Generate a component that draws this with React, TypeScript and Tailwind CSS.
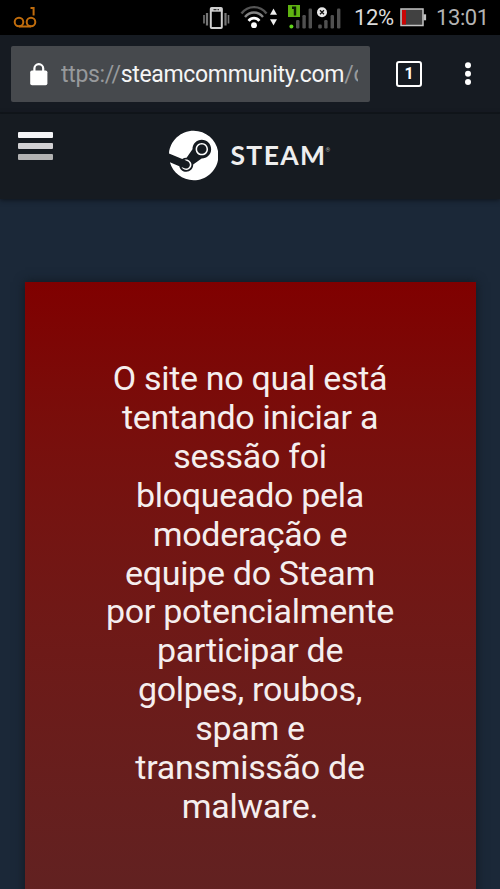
import { FaSteam } from 'react-icons/fa';

const MESSAGE_LINES = [
  'O site no qual está',
  'tentando iniciar a',
  'sessão foi',
  'bloqueado pela',
  'moderação e',
  'equipe do Steam',
  'por potencialmente',
  'participar de',
  'golpes, roubos,',
  'spam e',
  'transmissão de',
  'malware.',
];

function VoicemailIcon() {
  return (
    <svg className="ml-[13px] h-[35px] w-[24px]" viewBox="0 0 24 35" fill="none" stroke="#c06c0c" strokeWidth="2">
      <circle cx="6" cy="22" r="4.3" />
      <circle cx="18" cy="22" r="4.3" />
      <path d="M6 26.4H18M17.5 8H20.6V15.6" />
    </svg>
  );
}

function VibrateIcon() {
  return (
    <svg className="h-[35px] w-[28px]" viewBox="0 0 28 35" fill="none">
      <rect x="7.8" y="8" width="11" height="20" rx="0.8" stroke="#cfcfcf" strokeWidth="2" />
      <path d="M7.3 10H19.3" stroke="#cfcfcf" strokeWidth="3.4" />
      <path d="M10.5 9.6H16" stroke="#333" strokeWidth="1.2" strokeDasharray="3 1" />
      <path d="M4 13V25.5M22.5 13V25.5" stroke="#777" strokeWidth="2.2" />
      <path d="M1 15V23.5M25.5 15V23.5" stroke="#777" strokeWidth="1.6" />
    </svg>
  );
}

function WifiIcon() {
  return (
    <svg className="ml-[9px] h-[35px] w-[40px]" viewBox="0 0 40 35" fill="none">
      <path d="M1.5 13.5C8 5 20 5 26.5 13.5" stroke="#555" strokeWidth="2.4" />
      <path d="M5 17C10 11 18 11 23 17" stroke="#858585" strokeWidth="2.4" />
      <path d="M8.6 20.8C11.6 17.2 16.4 17.2 19.4 20.8" stroke="#fff" strokeWidth="2.8" />
      <circle cx="14" cy="25.2" r="2.9" fill="#fff" />
      <path d="M33.5 8.5L37 14.8H30Z" fill="#eee" />
      <path d="M33.5 25.5L37 19.2H30Z" fill="#eee" />
    </svg>
  );
}

function SimOneIcon() {
  return (
    <svg className="ml-[7px] h-[35px] w-[26px]" viewBox="0 0 26 35">
      <rect x="9" y="20" width="3.4" height="8.5" rx="1.2" fill="#505050" />
      <rect x="15.4" y="15" width="3.4" height="13.5" rx="1.2" fill="#505050" />
      <rect x="21.6" y="8.5" width="3.4" height="20" rx="1.2" fill="#505050" />
      <rect x="1" y="5" width="12" height="12" fill="#5fb311" />
      <path d="M5 7.8H8V15.5" fill="none" stroke="#0c1c02" strokeWidth="2.4" />
      <circle cx="4.4" cy="26.4" r="2" fill="#62d51c" />
    </svg>
  );
}

function SimTwoIcon() {
  return (
    <svg className="ml-[4px] h-[35px] w-[26px]" viewBox="0 0 26 35">
      <rect x="1.2" y="24.5" width="3.6" height="4" rx="1.2" fill="#505050" />
      <rect x="7.2" y="20" width="3.4" height="8.5" rx="1.2" fill="#505050" />
      <rect x="13.6" y="15" width="3.4" height="13.5" rx="1.2" fill="#505050" />
      <rect x="20" y="8.5" width="3.4" height="20" rx="1.2" fill="#505050" />
      <circle cx="5" cy="12.3" r="5" fill="#e8e8e8" />
      <path d="M3 10.3L7 14.3M7 10.3L3 14.3" stroke="#111" strokeWidth="1.3" />
    </svg>
  );
}

function BatteryIcon() {
  return (
    <svg className="h-[35px] w-[27px]" viewBox="0 0 27 35">
      <rect x="1" y="9" width="22" height="16.5" fill="#414141" stroke="#c4c4c4" strokeWidth="1.5" />
      <rect x="2" y="10" width="4" height="14.5" fill="#c80505" />
      <rect x="23.5" y="14.3" width="2.6" height="6" fill="#c4c4c4" />
    </svg>
  );
}

function StatusBar() {
  return (
    <div className="flex h-[35px] shrink-0 items-center bg-black text-[22px] leading-[35px] tracking-[-0.4px]">
      <VoicemailIcon />
      <div className="flex-1" />
      <VibrateIcon />
      <WifiIcon />
      <SimOneIcon />
      <SimTwoIcon />
      <span className="ml-[11px] w-[46px] whitespace-nowrap text-[#dcdcdc]">12%</span>
      <BatteryIcon />
      <span className="ml-[9px] w-[64px] whitespace-nowrap text-[#b4b4b4]">13:01</span>
    </div>
  );
}

function BrowserBar() {
  return (
    <div className="flex h-[79px] shrink-0 items-start border-b-2 border-[#11151a] bg-[#161b22] pt-[10.5px] pl-[11px]">
      <div className="flex h-[56px] w-[359px] items-center rounded-[2px] bg-[#46494d] pl-[18px]">
        <svg className="h-[26px] w-[20px] shrink-0" viewBox="0 0 20 26">
          <path d="M5.4 11V7.6a4.4 4.4 0 0 1 8.8 0V11" fill="none" stroke="#fff" strokeWidth="2.2" />
          <rect x="1.2" y="9.4" width="17.2" height="14.8" rx="1.8" fill="#fff" />
        </svg>
        <div className="mt-[3px] ml-[12px] w-[297px] overflow-hidden text-[23px] leading-[30px] tracking-[-0.32px] whitespace-nowrap text-[#97999c]">
          ttps://<span className="text-[#f5f5f5]">steamcommunity.com</span>/o
        </div>
      </div>
      <div className="mt-[15px] ml-[26px] flex h-[26px] w-[26px] items-center justify-center rounded-[3px] border-[2.5px] border-white text-[16px] font-bold text-white">
        1
      </div>
      <svg className="mt-[15px] ml-[42px] h-[26px] w-[8px]" viewBox="0 0 8 26" fill="#fff">
        <circle cx="4" cy="4.3" r="3" />
        <circle cx="4" cy="12.7" r="3" />
        <circle cx="4" cy="21.1" r="3" />
      </svg>
    </div>
  );
}

function SteamHeader() {
  return (
    <header className="flex h-[85px] shrink-0 items-start bg-[#161b21] shadow-[0_1px_5px_#0d131a]">
      <div className="mt-[18px] ml-[18px] flex w-[35px] flex-col gap-[5px]">
        <div className="h-[6px] rounded-[1px] bg-[#f4f5f7]" />
        <div className="h-[6px] rounded-[1px] bg-[#d2d1d3]" />
        <div className="h-[6px] rounded-[1px] bg-[#b2b2b2]" />
      </div>
      <FaSteam className="mt-[16px] ml-[116px] h-[51px] w-[49.4px] text-white" />
      <span className="mt-[21px] ml-[12px] font-['Lato'] text-[26.5px] leading-[40px] font-bold tracking-[1.4px] text-[#eee]">
        STEAM
      </span>
      <span className="mt-[32px] ml-[-1px] text-[6px] leading-[8px] text-[#aaa]">®</span>
    </header>
  );
}

export default function App() {
  return (
    <div className="flex h-[889px] w-[500px] flex-col overflow-hidden bg-[#1b2838] font-['Roboto',sans-serif]">
      <StatusBar />
      <BrowserBar />
      <SteamHeader />
      <main className="mx-[25px] mt-[83px] h-[640px] w-[451px] shrink-0 bg-linear-to-b from-[#800000] to-[#602222] pt-[77px] text-center text-[34px] leading-[38.9px] tracking-[-0.3px] text-[#f5eeee] shadow-[0_0_10px_#101820]">
        {MESSAGE_LINES.map((line) => (
          <p key={line} className="-ml-px whitespace-nowrap">
            {line}
          </p>
        ))}
      </main>
    </div>
  );
}
